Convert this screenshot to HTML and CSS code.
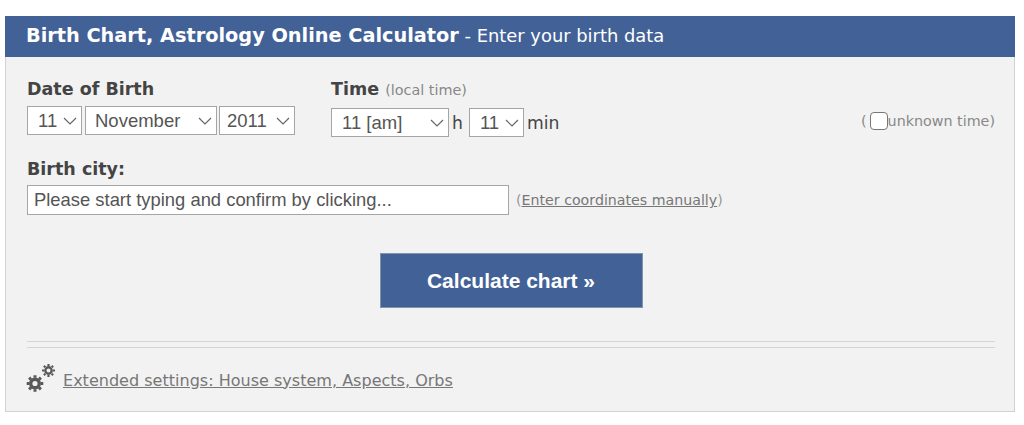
FILE: index.html
```html
<!DOCTYPE html>
<html lang="en">
<head>
    <meta charset="UTF-8">
    <meta name="viewport" content="width=device-width, initial-scale=1.0">
    <title>Birth Chart, Astrology Online Calculator</title>
    <link rel="stylesheet" href="styles.css">
</head>
<body>
    <div class="panel">
        <header class="panel-head">
            <b>Birth Chart, Astrology Online Calculator</b> - Enter your birth data
        </header>

        <form class="panel-body">
            <div class="row-birth">
                <div class="field-date">
                    <div class="label">Date of Birth</div>
                    <div class="selects">
                        <select class="sel-day"><option>11</option></select>
                        <select class="sel-month"><option>November</option></select>
                        <select class="sel-year"><option>2011</option></select>
                    </div>
                </div>
                <div class="field-time">
                    <div class="label">Time <span class="hint">(local time)</span></div>
                    <div class="selects selects-time">
                        <select class="sel-hour"><option>11 [am]</option></select>
                        <span class="unit unit-h">h</span>
                        <select class="sel-min"><option>11</option></select>
                        <span class="unit">min</span>
                    </div>
                </div>
                <label class="unknown">(<input type="checkbox">unknown time)</label>
            </div>

            <div class="label city-label">Birth city:</div>
            <div class="city-row">
                <input type="text" class="city-input" placeholder="Please start typing and confirm by clicking...">
                <span class="manual">(<a href="#">Enter coordinates manually</a>)</span>
            </div>

            <div class="submit-row">
                <button type="button" class="submit-btn">Calculate chart »</button>
            </div>

            <div class="divider"></div>

            <div class="extended">
                <svg class="gears" width="30" height="30" viewBox="0 0 30 30">
                    <g fill="none" stroke="#595959">
                        <circle cx="8" cy="18.500" r="4.300" stroke-width="3.400"/>
                        <path stroke-width="3" d="M8 10.200v2.600M8 24.200v2.600M-.3 18.500h2.600M13.700 18.500h2.600M2.100 12.600l1.900 1.900M12 22.500l1.900 1.900M2.100 24.400L4 22.500M12 14.500l1.900-1.900"/>
                        <circle cx="21.500" cy="5.500" r="3.200" stroke-width="2.400"/>
                        <path stroke-width="2.200" d="M21.500-1v2M21.500 10v2M15 5.500h2M26 5.500h2M16.900.9l1.400 1.400M24.700 8.700l1.400 1.400M16.900 10.100l1.400-1.400M24.700 2.300l1.400-1.400"/>
                    </g>
                </svg>
                <a href="#">Extended settings: House system, Aspects, Orbs</a>
            </div>
        </form>
    </div>
</body>
</html>
```

FILE: styles.css
```css
* {
    margin: 0;
    padding: 0;
    box-sizing: border-box;
}

body {
    background-color: #fff;
    font-family: "DejaVu Sans", Verdana, sans-serif;
    padding: 16px 9px 13px 5px;
}

.panel {
    height: 396px;
    background-color: #f2f2f2;
    border: 1px solid #d2d2d2;
    border-top: none;
}

.panel-head {
    height: 41px;
    margin: 0 -1px;
    padding-left: 21px;
    background-color: #426297;
    color: #fff;
    font-size: 17.900px;
    line-height: 39px;
    white-space: nowrap;
}

.panel-head b {
    font-size: 19.300px;
}

.panel-body {
    padding: 21px 19px 0 21px;
}

.row-birth {
    display: flex;
}

.field-date {
    width: 304px;
}

.label {
    color: #444;
    font-size: 17.500px;
    font-weight: bold;
    line-height: 22px;
}

.hint {
    color: #888;
    font-size: 14.400px;
    font-weight: normal;
}

.selects {
    display: flex;
    align-items: center;
    gap: 3px;
    margin-top: 6px;
}

.selects-time {
    margin-top: 7px;
}

select {
    height: 29px;
    appearance: none;
    padding-left: 10px;
    background: #fff url("data:image/svg+xml,%3Csvg xmlns='http://www.w3.org/2000/svg' width='14' height='8'%3E%3Cpath d='M1 1l6 6 6-6' fill='none' stroke='%23666' stroke-width='1.200'/%3E%3C/svg%3E") no-repeat right 4px center;
    border: 1px solid #a5a5a5;
    border-radius: 0;
    color: #555;
    font-family: "Liberation Sans", Arial, sans-serif;
    font-size: 18.500px;
}

.sel-day { width: 55px; }
.sel-month { width: 132px; padding-left: 9px; }
.sel-year { width: 76px; margin-left: -1px; padding-left: 7px; }
.sel-hour { width: 118px; }
.sel-min { width: 55px; }

.unit {
    color: #444;
    font-family: "DejaVu Sans", Verdana, sans-serif;
    font-size: 17.200px;
}

.unit-h {
    margin-right: 3px;
}

.unknown {
    display: flex;
    align-items: center;
    align-self: flex-end;
    margin: 0 0 7px auto;
    color: #888;
    font-size: 14.300px;
}

.unknown input {
    width: 18px;
    height: 18px;
    margin-left: 3px;
    appearance: none;
    background-color: #fff;
    border: 1px solid #777;
    border-radius: 4px;
}

.city-label {
    margin-top: 21px;
}

.city-row {
    display: flex;
    align-items: center;
    margin-top: 5px;
}

.city-input {
    width: 482px;
    height: 30px;
    padding-left: 6px;
    background-color: #fff;
    border: 1px solid #a5a5a5;
    font-family: "Liberation Sans", Arial, sans-serif;
    font-size: 18.400px;
}

.city-input::placeholder {
    color: #555;
    opacity: 1;
}

.manual {
    margin-left: 7px;
    color: #999;
    font-size: 14.200px;
}

a {
    color: #777;
}

.submit-row {
    display: flex;
    justify-content: center;
    margin-top: 38px;
}

.submit-btn {
    width: 263px;
    height: 55px;
    background-color: #426297;
    border: 1px solid #8095ad;
    color: #fff;
    font-family: "Liberation Sans", Arial, sans-serif;
    font-size: 21px;
    font-weight: bold;
}

.divider {
    height: 7px;
    margin-top: 33px;
    border-top: 1px solid #d5d5d5;
    border-bottom: 1px solid #d5d5d5;
}

.extended {
    display: flex;
    align-items: center;
    gap: 6px;
    margin-top: 17px;
    font-size: 16.050px;
}

.gears {
    overflow: visible;
}
```
